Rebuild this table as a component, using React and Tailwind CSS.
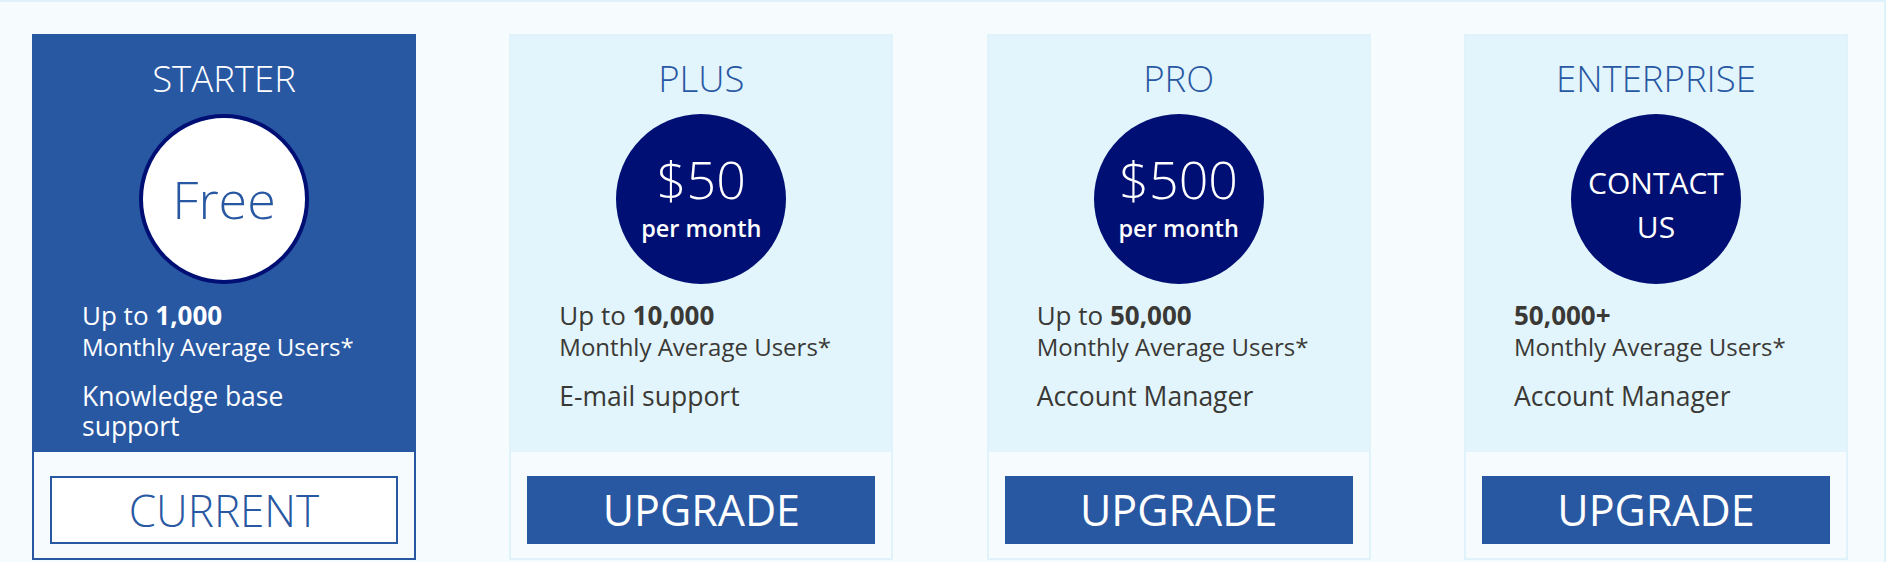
import React from "react";

const plans = [
  {
    name: "STARTER",
    active: true,
    lead: (
      <>
        Up to <span className="font-bold">1,000</span>
      </>
    ),
    extra: (
      <>
        Knowledge base
        <br />
        support
      </>
    ),
    button: "CURRENT",
  },
  {
    name: "PLUS",
    price: "$50",
    lead: (
      <>
        Up to <span className="font-bold">10,000</span>
      </>
    ),
    extra: "E-mail support",
    button: "UPGRADE",
  },
  {
    name: "PRO",
    price: "$500",
    lead: (
      <>
        Up to <span className="font-bold">50,000</span>
      </>
    ),
    extra: "Account Manager",
    button: "UPGRADE",
  },
  {
    name: "ENTERPRISE",
    contact: true,
    lead: <span className="font-bold">50,000+</span>,
    extra: "Account Manager",
    button: "UPGRADE",
  },
];

function Circle({ plan }) {
  if (plan.active) {
    return (
      <div className="mt-[18px] w-[170px] h-[170px] rounded-full bg-white border-[4px] border-[#000f73] flex items-center justify-center">
        <span className="text-[52px] leading-[52px] font-light text-[#2958a3]">Free</span>
      </div>
    );
  }
  if (plan.contact) {
    return (
      <div className="mt-[18px] w-[170px] h-[170px] rounded-full bg-[#000f73] flex flex-col items-center justify-center pt-[11px] text-white">
        <span className="text-[30px] leading-[44px] font-normal">CONTACT</span>
        <span className="text-[30px] leading-[44px] font-normal">US</span>
      </div>
    );
  }
  return (
    <div className="mt-[18px] w-[170px] h-[170px] rounded-full bg-[#000f73] flex flex-col items-center justify-center pb-[4px] text-white">
      <span className="text-[52px] leading-[56px] font-light">{plan.price}</span>
      <span className="mt-[6px] text-[23.5px] leading-[30px] font-semibold">per month</span>
    </div>
  );
}

function Card({ plan }) {
  const a = plan.active;
  return (
    <div
      className={
        "w-[384px] h-[526px] flex flex-col border-2 " +
        (a ? "border-[#2958a3]" : "border-[#e0f3fb]")
      }
    >
      <div
        className={
          "h-[416px] flex flex-col items-center pt-[24px] " +
          (a ? "bg-[#2958a3]" : "bg-[#e2f5fc]")
        }
      >
        <div
          className={
            "h-[36px] text-[36.5px] leading-[36px] font-light " +
            (a ? "text-white" : "text-[#2958a3]")
          }
        >
          {plan.name}
        </div>
        <Circle plan={plan} />
        <div
          className={
            "self-stretch px-[48px] mt-[15px] " + (a ? "text-white" : "text-[#3a3936]")
          }
        >
          <div className="text-[26px] leading-[32px]">{plan.lead}</div>
          <div className="text-[24px] leading-[32px]">Monthly Average Users*</div>
          <div className="mt-[18px] text-[26.5px] leading-[30px]">{plan.extra}</div>
        </div>
      </div>
      <div className="flex-1 bg-[#f6fbfe] px-[16px] pt-[24px] pb-[14px]">
        {a ? (
          <div className="h-[68px] bg-white border-2 border-[#2958a3] flex items-center justify-center text-[44px] font-light text-[#2958a3]">
            {plan.button}
          </div>
        ) : (
          <div className="h-[68px] bg-[#2958a3] flex items-center justify-center text-[43px] font-normal text-white">
            {plan.button}
          </div>
        )}
      </div>
    </div>
  );
}

export default function App() {
  return (
    <div
      className="w-[1886px] h-[562px] bg-[#f6fbfe] border-t-2 border-r-2 border-[#dff2fb] overflow-hidden"
      style={{ fontFamily: '"Open Sans", "Noto Sans", sans-serif' }}
    >
      <div className="flex justify-between pl-[32px] pr-[36px] pt-[32px]">
        {plans.map((p) => (
          <Card key={p.name} plan={p} />
        ))}
      </div>
    </div>
  );
}
